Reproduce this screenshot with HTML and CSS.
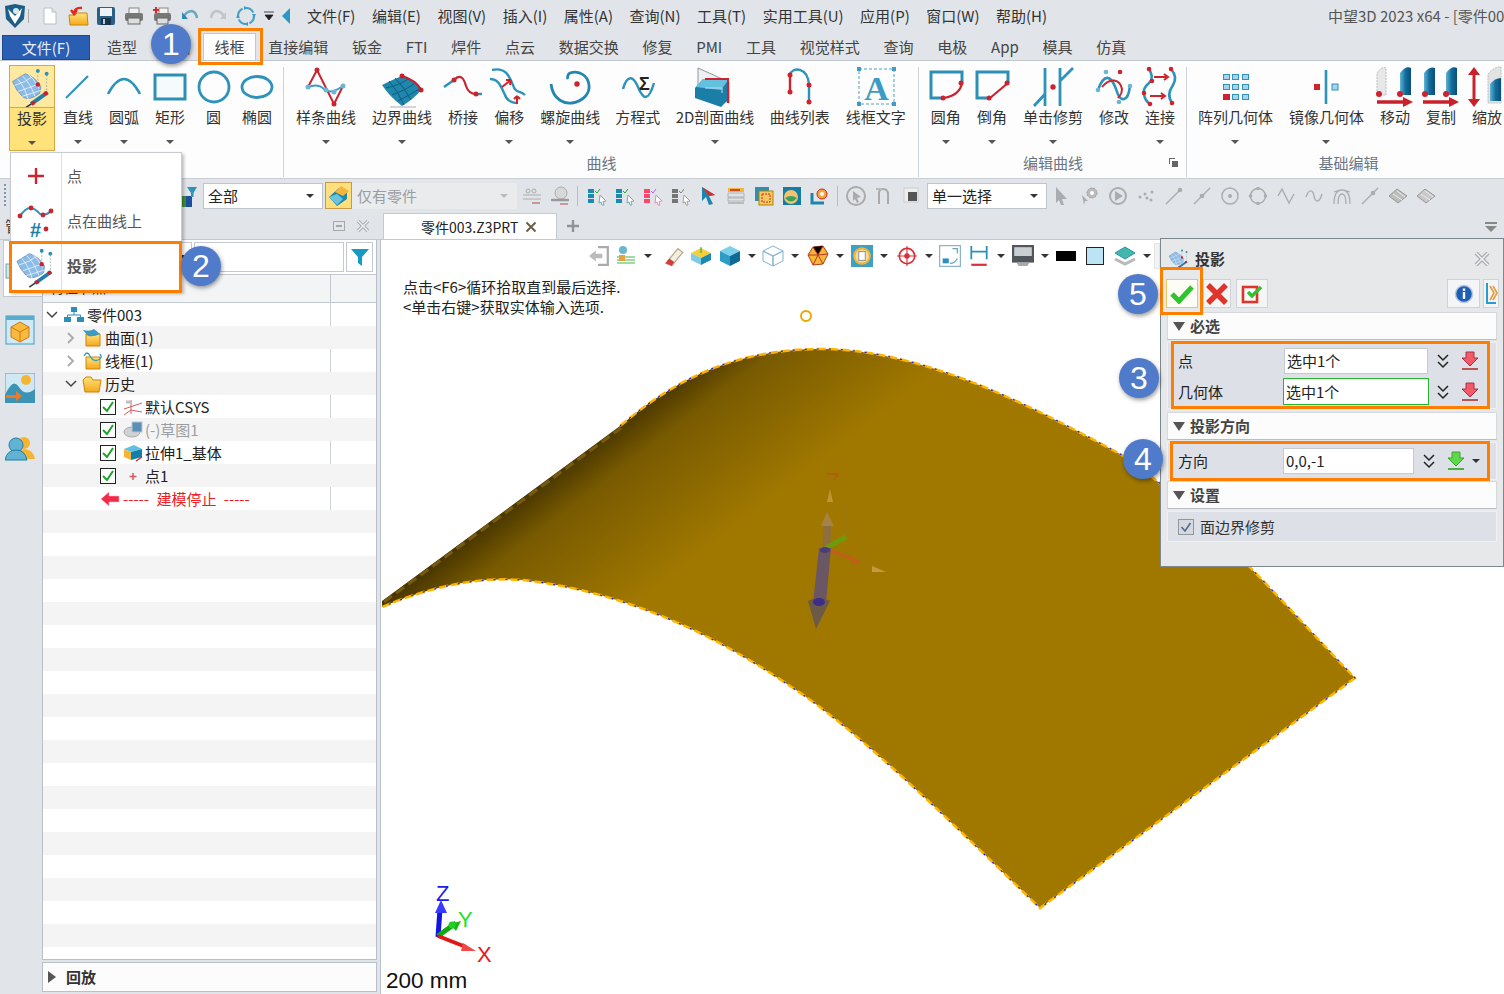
FILE: index.html
```html
<!DOCTYPE html>
<html lang="zh-CN">
<head>
<meta charset="utf-8">
<title>中望3D 2023 x64</title>
<link rel="stylesheet" href="styles.css">
</head>
<body>
<svg class="defs" width="0" height="0">
<defs>
<linearGradient id="surf" gradientUnits="userSpaceOnUse" x1="460" y1="530" x2="560" y2="660"><stop offset="0" stop-color="#3c2c00"/><stop offset=".3" stop-color="#785a00"/><stop offset="1" stop-color="#a07800"/></linearGradient>
<linearGradient id="cyl" x1="0" y1="0" x2="1" y2="0"><stop offset="0" stop-color="#5fb4d6"/><stop offset=".5" stop-color="#126d9b"/><stop offset="1" stop-color="#0a4f78"/></linearGradient>
<linearGradient id="yel" x1="0" y1="0" x2="0" y2="1"><stop offset="0" stop-color="#ffe27a"/><stop offset="1" stop-color="#f4a81c"/></linearGradient>
<symbol id="proj" viewBox="0 0 44 44">
<path d="M2 16 L15 8 Q24 10 31 21 L30 28 Q19 36 13 32 Q6 26 2 16Z" fill="#8cbbe6" stroke="#6d8fb2" stroke-width=".8"/>
<path d="M7 13 Q14 20 18 34 M12 10 Q20 17 25 31 M18 8 Q24 13 29 23 M4 20 Q15 17 24 10 M8 26 Q20 22 30 18 M12 31 Q22 28 31 25" fill="none" stroke="#e4f0fb" stroke-width=".9"/>
<path d="M28 6 V19 M37 9 V26" stroke="#8aa" stroke-width=".8" stroke-dasharray="2 1.5"/>
<path d="M21 39 L38 27" stroke="#1f7fa8" stroke-width="4"/><path d="M15 43 L21 39" stroke="#333" stroke-width="1.6"/>
<circle cx="28" cy="5" r="2" fill="#2b8fb8"/><circle cx="37" cy="8" r="2" fill="#2b8fb8"/><circle cx="28" cy="19" r="2.3" fill="#d01f2b"/><circle cx="23" cy="38" r="2.2" fill="#d01f2b"/><circle cx="36" cy="28" r="2.2" fill="#d01f2b"/>
</symbol>
<symbol id="redown" viewBox="0 0 20 20"><path d="M6 1H14V7H18L10 15L2 7H6Z" fill="#f25a6a" stroke="#a83040" stroke-width="1"/><path d="M2 18H18" stroke="#b55" stroke-width="2"/></symbol>
<symbol id="chev" viewBox="0 0 14 16"><path d="M2 2L7 7L12 2M2 9L7 14L12 9" fill="none" stroke="#222" stroke-width="1.5"/></symbol>
<symbol id="chk" viewBox="0 0 16 16"><rect x=".5" y=".5" width="15" height="15" fill="#fff" stroke="#222"/><path d="M3 8L7 12L13 3" fill="none" stroke="#19a52b" stroke-width="2"/></symbol>
<symbol id="slct" viewBox="0 0 22 22"><rect x="3" y="4" width="6" height="4" fill="#1a8ab0"/><rect x="3" y="9" width="6" height="4" fill="#1a8ab0"/><rect x="3" y="14" width="6" height="4" fill="#1a8ab0"/><path d="M15 10L21 16L18 16.500L19 20L17 20L16 17L14 18Z" fill="#fff" stroke="#7aa"/><path d="M10 6L12 8L15 4" stroke="#2a2" fill="none"/></symbol>
</defs>
</svg>

<div class="app">
<header class="titlebar">
  <svg class="logo" width="24" height="26" viewBox="0 0 24 26"><path d="M2 3L12 1L22 3L21 16L12 25L3 16Z" fill="#1d5e86"/><path d="M5 6L12 13L19 5L17 13L12 21L7 13Z" fill="#fff"/><circle cx="13" cy="8" r="3" fill="#d8e6ee"/></svg>
  <span class="qsep"></span>
  <span class="qa"><svg width="20" height="20" viewBox="0 0 20 20"><path d="M4 2H12L16 6V18H4Z" fill="#fff" stroke="#b8bec4"/><path d="M12 2V6H16" fill="#e5e8ea" stroke="#b8bec4"/></svg></span>
  <span class="qa"><svg width="22" height="22" viewBox="0 0 22 22"><path d="M2 10H8L10 8H20L21 20H3Z" fill="url(#yel)" stroke="#c8860a"/><path d="M15 3Q8 2 7 8M4 5L7 9L10 5" fill="none" stroke="#e02a1c" stroke-width="2.400"/></svg></span>
  <span class="qa"><svg width="20" height="20" viewBox="0 0 20 20"><rect x="1" y="1" width="18" height="18" rx="2" fill="#2b5f83"/><rect x="4" y="2" width="12" height="8" fill="#eef3f6"/><rect x="5" y="12" width="10" height="7" fill="#17364c"/><rect x="7" y="13" width="2" height="5" fill="#bcd"/></svg></span>
  <span class="qa"><svg width="20" height="20" viewBox="0 0 20 20"><rect x="5" y="2" width="10" height="6" fill="#f2f2f2" stroke="#888"/><rect x="1" y="7" width="18" height="8" rx="2" fill="#777"/><rect x="4" y="12" width="12" height="6" fill="#ddd" stroke="#666"/></svg></span>
  <span class="qa"><svg width="20" height="20" viewBox="0 0 20 20"><rect x="7" y="2" width="9" height="6" fill="#f2f2f2" stroke="#888"/><rect x="2" y="7" width="17" height="8" rx="2" fill="#777"/><rect x="5" y="12" width="11" height="6" fill="#ddd" stroke="#666"/><path d="M1 4H7M4 1V7" stroke="#d42a2a" stroke-width="2"/></svg></span>
  <span class="qa"><svg width="18" height="14" viewBox="0 0 18 14"><path d="M2 9Q5 2 11 2Q15 3 16 9" fill="none" stroke="#6ba7bd" stroke-width="2.500"/><path d="M1 3V10H7Z" fill="#2d8bb0"/></svg></span>
  <span class="qa"><svg width="18" height="14" viewBox="0 0 18 14"><path d="M16 9Q13 2 7 2Q3 3 2 9" fill="none" stroke="#c0c4c7" stroke-width="2.500"/><path d="M17 3V10H11Z" fill="#c4c7ca"/></svg></span>
  <span class="qa"><svg width="22" height="22" viewBox="0 0 22 22"><circle cx="11" cy="11" r="8" fill="none" stroke="#4aa3c7" stroke-width="2.200" stroke-dasharray="9 3.500"/><path d="M9 1L13 3L9 5ZM13 21L9 19L13 17ZM1 13L3 9L5 13ZM21 9L19 13L17 9Z" fill="#3f9cc3"/></svg></span>
  <span class="qa-sm"><svg width="12" height="10" viewBox="0 0 12 10"><path d="M1 1H11M2 4H10L6 9Z" fill="#222" stroke="#222" stroke-width=".8"/></svg></span>
  <span class="qa-sm"><svg width="10" height="16" viewBox="0 0 10 16"><path d="M9 0V16L1 8Z" fill="#2a97c4"/></svg></span>
  <nav class="menubar"><span>文件(F)</span><span>编辑(E)</span><span>视图(V)</span><span>插入(I)</span><span>属性(A)</span><span>查询(N)</span><span>工具(T)</span><span>实用工具(U)</span><span>应用(P)</span><span>窗口(W)</span><span>帮助(H)</span></nav>
  <div class="apptitle">中望3D 2023 x64 - [零件003.Z3PRT]</div>
</header>

<div class="tabbar">
  <span class="filetab">文件(F)</span>
  <span class="tab">造型</span><span class="tab">曲面</span><span class="tab active">线框</span><span class="tab">直接编辑</span><span class="tab">钣金</span><span class="tab">FTI</span><span class="tab">焊件</span><span class="tab">点云</span><span class="tab">数据交换</span><span class="tab">修复</span><span class="tab">PMI</span><span class="tab">工具</span><span class="tab">视觉样式</span><span class="tab">查询</span><span class="tab">电极</span><span class="tab">App</span><span class="tab">模具</span><span class="tab">仿真</span>
</div>

<section class="ribbon">
  <div class="rgroup g1">
    <div class="ritems">
      <div class="ritem hot"><svg class="ric" width="45" height="42" viewBox="0 0 44 42"><use href="#proj" width="44" height="44"/></svg><span>投影</span><i class="caret"></i></div>
      <div class="ritem"><svg class="ric" viewBox="0 0 44 44"><path d="M10 33L32 11" stroke="#2e93ba" stroke-width="2.200"/></svg><span>直线</span><i class="caret"></i></div>
      <div class="ritem"><svg class="ric" viewBox="0 0 44 44"><path d="M6 29Q22 -1 38 29" fill="none" stroke="#2e93ba" stroke-width="2.600"/></svg><span>圆弧</span><i class="caret"></i></div>
      <div class="ritem"><svg class="ric" viewBox="0 0 44 44"><rect x="7" y="10" width="30" height="24" fill="#f5fafc" stroke="#2e8fb5" stroke-width="3"/></svg><span>矩形</span><i class="caret"></i></div>
      <div class="ritem narrow"><svg class="ric" viewBox="0 0 44 44"><circle cx="22" cy="22" r="15" fill="none" stroke="#2e93ba" stroke-width="2.800"/></svg><span>圆</span></div>
      <div class="ritem"><svg class="ric" viewBox="0 0 44 44"><ellipse cx="22" cy="22" rx="15" ry="10.500" fill="none" stroke="#2e93ba" stroke-width="2.800"/></svg><span>椭圆</span></div>
    </div>
    <div class="rlabel"></div>
  </div>
  <i class="rsep"></i>
  <div class="rgroup">
    <div class="ritems">
      <div class="ritem"><svg class="ric" viewBox="0 0 44 44"><path d="M4 22L13 5L30 39L39 21" fill="none" stroke="#c9252e" stroke-width="2"/><path d="M4 22Q14 18 20 24T39 21" fill="none" stroke="#3d9bc0" stroke-width="2"/><circle cx="13" cy="5" r="2.500" fill="#c9252e"/><circle cx="30" cy="39" r="2.500" fill="#c9252e"/><circle cx="4" cy="22" r="2.500" fill="#6cb6d4"/><circle cx="22" cy="25" r="2.500" fill="#6cb6d4"/><circle cx="30" cy="27" r="2.500" fill="#6cb6d4"/><circle cx="39" cy="21" r="2.500" fill="#6cb6d4"/></svg><span>样条曲线</span><i class="caret"></i></div>
      <div class="ritem"><svg class="ric" viewBox="0 0 44 44"><path d="M2 20Q14 14 22 11Q36 16 42 24Q34 34 22 41Q10 32 2 20Z" fill="#1f87ac"/><path d="M9 16Q18 26 24 40M15 13Q24 22 31 35M6 23Q20 20 28 14M12 30Q26 25 34 19M18 36Q30 30 39 24" fill="none" stroke="#0e5d82" stroke-width="1"/><path d="M22 11Q36 15 41 25" fill="none" stroke="#c81f2a" stroke-width="2.200"/><circle cx="22" cy="11" r="2.500" fill="#c81f2a"/><circle cx="41" cy="25" r="2.500" fill="#c81f2a"/><path d="M10 42H36" stroke="#bbb" stroke-width="2" opacity=".6"/></svg><span>边界曲线</span><i class="caret"></i></div>
      <div class="ritem"><svg class="ric" viewBox="0 0 44 44"><path d="M3 22L13 15M35 29H41" stroke="#2e93ba" stroke-width="2.500"/><path d="M13 15C20 8 23 14 25 21C27 27 30 29 35 29" fill="none" stroke="#c9252e" stroke-width="2.200"/><circle cx="13" cy="15" r="2.500" fill="#c9252e"/><circle cx="35" cy="29" r="2.500" fill="#c9252e"/></svg><span>桥接</span></div>
      <div class="ritem"><svg class="ric" viewBox="0 0 44 44"><path d="M5 5C18 2 22 10 26 20C28 28 34 26 38 30M3 14C12 14 14 22 18 30C20 36 26 38 30 38" fill="none" stroke="#2e93ba" stroke-width="2.400"/><path d="M15 22L24 15M24 15L19 15M24 15L23 20M30 39V31M30 31L27 34M30 31L33 34" fill="none" stroke="#d0222c" stroke-width="2"/></svg><span>偏移</span><i class="caret"></i></div>
      <div class="ritem"><svg class="ric" viewBox="0 0 44 44"><path d="M3 19C5 36 18 39 24 38C36 36 42 28 41 20C40 10 30 5 22 8C20 9 19 12 20 14" fill="none" stroke="#2386ae" stroke-width="2.800"/><circle cx="29" cy="19" r="2.700" fill="#d0222c"/></svg><span>螺旋曲线</span><i class="caret"></i></div>
      <div class="ritem m"><svg class="ric" viewBox="0 0 44 44"><path d="M7 24C11 10 17 10 22 22S32 38 38 18" fill="none" stroke="#2e93ba" stroke-width="2.500"/><text x="23" y="25" class="sigma">Σ</text></svg><span>方程式</span></div>
      <div class="ritem d2"><svg class="ric" viewBox="0 0 44 44"><path d="M5 3L36 17V38L5 24Z" fill="#eef0f2" stroke="#8f979d"/><path d="M2 23L10 14L36 14V34L28 42L2 33Z" fill="#1b7ea6"/><path d="M10 14L36 14L28 25L3 22Z" fill="#63c0de"/><path d="M12 23H29V28" fill="none" stroke="#b7e0ec"/><path d="M12 14H35V38" fill="none" stroke="#d0222c" stroke-width="2"/></svg><span>2D剖面曲线</span><i class="caret"></i></div>
      <div class="ritem"><svg class="ric" viewBox="0 0 44 44"><path d="M12 10C14 1 30 2 31 20V37" fill="none" stroke="#2e93ba" stroke-width="2.400"/><path d="M12 10V27" stroke="#d0222c" stroke-width="2.400"/><circle cx="12" cy="10" r="2.500" fill="#d0222c"/><circle cx="12" cy="27" r="2.500" fill="#d0222c"/><circle cx="31" cy="20" r="2.500" fill="#d0222c"/><circle cx="31" cy="37" r="2.500" fill="#d0222c"/></svg><span>曲线列表</span></div>
      <div class="ritem endg"><svg class="ric" viewBox="0 0 44 44"><rect x="5" y="4" width="35" height="35" fill="none" stroke="#4fa0c0" stroke-dasharray="3 2"/><text x="22.500" y="35" class="bigA">A</text><g fill="#3f9cc3"><rect x="3" y="2" width="4" height="4"/><rect x="38" y="2" width="4" height="4"/><rect x="3" y="37" width="4" height="4"/><rect x="38" y="37" width="4" height="4"/></g></svg><span>线框文字</span></div>
    </div>
    <div class="rlabel">曲线</div>
  </div>
  <i class="rsep"></i>
  <div class="rgroup">
    <div class="ritems">
      <div class="ritem"><svg class="ric" viewBox="0 0 44 44"><path d="M17 33H7V7H38V18" fill="none" stroke="#2e8fb5" stroke-width="3"/><path d="M38 18Q36 30 20 33" fill="none" stroke="#c9252e" stroke-width="2.200"/><circle cx="37" cy="18" r="2.500" fill="#c9252e"/><circle cx="19" cy="33" r="2.500" fill="#c9252e"/></svg><span>圆角</span><i class="caret"></i></div>
      <div class="ritem"><svg class="ric" viewBox="0 0 44 44"><path d="M17 33H7V7H38V18" fill="none" stroke="#2e8fb5" stroke-width="3"/><path d="M38 18L20 33" fill="none" stroke="#c9252e" stroke-width="2.200"/><circle cx="37" cy="18" r="2.500" fill="#c9252e"/><circle cx="19" cy="33" r="2.500" fill="#c9252e"/></svg><span>倒角</span><i class="caret"></i></div>
      <div class="ritem"><svg class="ric" viewBox="0 0 44 44"><path d="M14 3V41M29 3V41M29 16L42 3M3 41L14 29" fill="none" stroke="#2e93ba" stroke-width="2.800"/><circle cx="22" cy="22" r="2.700" fill="#d0222c"/></svg><span>单击修剪</span><i class="caret"></i></div>
      <div class="ritem"><svg class="ric" viewBox="0 0 44 44"><path d="M6 25C12 8 19 10 24 24C28 38 36 38 38 21" fill="none" stroke="#2e93ba" stroke-width="2.600"/><path d="M10 22C18 12 28 14 30 24C30 30 28 30 26 33" fill="none" stroke="#c9252e" stroke-width="2"/><circle cx="14" cy="7" r="2.300" fill="#6cb6d4"/><circle cx="28" cy="7" r="2.300" fill="#d0222c"/><circle cx="6" cy="25" r="2.300" fill="#6cb6d4"/><circle cx="38" cy="21" r="2.300" fill="#6cb6d4"/><circle cx="27" cy="37" r="2.300" fill="#6cb6d4"/></svg><span>修改</span></div>
      <div class="ritem"><svg class="ric" viewBox="0 0 44 44"><path d="M11 4Q16 12 12 17Q4 24 6 29Q7 36 12 39M33 4Q40 12 35 20Q28 30 34 38" fill="none" stroke="#2e93ba" stroke-width="2.600"/><path d="M16 12H28M26 9L30 12L26 15M12 31H25M23 28L27 31L23 34" fill="none" stroke="#d0222c" stroke-width="2"/><g fill="#d0222c"><circle cx="11" cy="4" r="2.300"/><circle cx="33" cy="4" r="2.300"/><circle cx="14" cy="16" r="2.300"/><circle cx="6" cy="28" r="2.300"/><circle cx="12" cy="39" r="2.300"/><circle cx="34" cy="38" r="2.300"/></g></svg><span>连接</span><i class="caret"></i></div>
    </div>
    <div class="rlabel withcorner">编辑曲线<svg class="corner" width="9" height="9" viewBox="0 0 9 9"><path d="M0 0H6V1H1V6H0Z" fill="#666"/><path d="M3 3H9V9H3Z" fill="#666"/></svg></div>
  </div>
  <i class="rsep last"></i>
  <div class="rgroup">
    <div class="ritems">
      <div class="ritem"><svg class="ric" viewBox="0 0 44 44"><g fill="#a9d2ea" stroke="#2e93ba"><rect x="10.500" y="9.500" width="6" height="5"/><rect x="19.500" y="9.500" width="6" height="5"/><rect x="29.500" y="9.500" width="6" height="5"/><rect x="10.500" y="19.500" width="6" height="5"/><rect x="19.500" y="19.500" width="6" height="5"/><rect x="29.500" y="19.500" width="6" height="5"/><rect x="19.500" y="29.500" width="6" height="5"/><rect x="29.500" y="29.500" width="6" height="5"/></g><rect x="10" y="29" width="7" height="6" fill="#d0222c"/></svg><span>阵列几何体</span><i class="caret"></i></div>
      <div class="ritem"><svg class="ric" viewBox="0 0 44 44"><path d="M22 5V39" stroke="#2e93ba" stroke-width="2.600"/><rect x="10" y="19" width="6" height="6" fill="#d0222c"/><rect x="28" y="19" width="6" height="6" fill="#a9d2ea" stroke="#2e93ba"/></svg><span>镜像几何体</span><i class="caret"></i></div>
      <div class="ritem"><svg class="ric" viewBox="0 0 44 44"><path d="M4 8Q9 1 13 3V30H4Z" fill="#e8e8e8" stroke="#bbb" stroke-dasharray="2 1"/><path d="M27 8Q33 0 38 3V30H27Z" fill="url(#cyl)"/><circle cx="6" cy="29" r="3" fill="#d0222c"/><circle cx="27" cy="29" r="3" fill="#d0222c"/><path d="M4 37H32" stroke="#c9202a" stroke-width="3.500"/><path d="M30 32L40 37L30 42Z" fill="#c9202a"/></svg><span>移动</span></div>
      <div class="ritem"><svg class="ric" viewBox="0 0 44 44"><path d="M5 8Q11 1 16 3V30H5Z" fill="url(#cyl)"/><path d="M27 8Q33 0 38 3V30H27Z" fill="url(#cyl)"/><circle cx="6" cy="29" r="3" fill="#d0222c"/><circle cx="27" cy="29" r="3" fill="#d0222c"/><path d="M4 37H32" stroke="#c9202a" stroke-width="3.500"/><path d="M30 32L40 37L30 42Z" fill="#c9202a"/></svg><span>复制</span></div>
      <div class="ritem"><svg class="ric" viewBox="0 0 44 44"><path d="M9 7V37" stroke="#c9202a" stroke-width="3"/><path d="M3 10L9 2L15 10ZM3 34L9 42L15 34Z" fill="#c9202a"/><path d="M23 9Q30 1 36 2V38H23Z" fill="#e3e3e3" stroke="#bbb" stroke-dasharray="2 1"/><path d="M25 19Q30 13 36 13V36H25Z" fill="url(#cyl)"/></svg><span>缩放</span></div>
    </div>
    <div class="rlabel shifted">基础编辑</div>
  </div>
</section>

<div class="toolbar">
  <i class="grip"></i>
  <span class="tb-spacer"></span>
  <svg class="filt" width="20" height="24" viewBox="0 0 20 24"><rect x="0" y="12" width="4" height="11" fill="#3f8f3a"/><rect x="4" y="12" width="6" height="11" fill="#1d4f9e"/><path d="M5 3H15L11.500 9V13L9 13V9Z" fill="#2e93ba"/></svg>
  <div class="combo c-all"><span>全部</span><i class="caret dk"></i></div>
  <span class="hotbtn"><svg width="24" height="24" viewBox="0 0 24 24"><path d="M2 13L12 4L20 8V15L10 22Z" fill="#1e88b0"/><path d="M8 8L14 2L22 7L16 12Z" fill="#f4b53d"/><path d="M2 13L10 10L16 15L10 21Z" fill="#6cc3de"/></svg></span>
  <div class="combo c-parts"><span>仅有零件</span><i class="caret lt"></i></div>
  <span class="tb"><svg width="20" height="20" viewBox="0 0 20 20"><path d="M1 9H19M1 13H19" stroke="#aaa"/><circle cx="6" cy="5" r="2" fill="none" stroke="#aaa"/><circle cx="12" cy="5" r="2" fill="none" stroke="#aaa"/><path d="M10 17H18" stroke="#c99" stroke-width="2"/></svg></span>
  <span class="tb"><svg width="20" height="20" viewBox="0 0 20 20"><circle cx="11" cy="7" r="6" fill="#d8d8d8" stroke="#aaa"/><path d="M1 14H19" stroke="#999" stroke-width="2.500"/><path d="M10 18H18" stroke="#c99" stroke-width="2"/></svg></span>
  <i class="vsep"></i>
  <span class="tb"><svg width="22" height="22"><use href="#slct"/></svg></span>
  <span class="tb"><svg width="22" height="22"><use href="#slct"/></svg></span>
  <span class="tb"><svg width="22" height="22" class="hue-r"><use href="#slct"/></svg></span>
  <span class="tb"><svg width="22" height="22" class="gray"><use href="#slct"/></svg></span>
  <span class="tb"><svg width="20" height="20" viewBox="0 0 20 20"><path d="M4 1L17 9L11 10L15 18L11 19L8 11L4 15Z" fill="#1a86ae"/><path d="M4 1L17 9L11 10Z" fill="#d43030"/></svg></span>
  <span class="tb"><svg width="20" height="20" viewBox="0 0 20 20"><rect x="2" y="2" width="16" height="4" fill="#f4b53d"/><rect x="2" y="7" width="16" height="4" fill="#dfe3e6" stroke="#888" stroke-width=".5"/><rect x="2" y="12" width="16" height="3" fill="#dfe3e6" stroke="#888" stroke-width=".5"/><path d="M4 4H14" stroke="#c22" stroke-width="1.500"/><rect x="2" y="16" width="16" height="2" fill="#bbb"/></svg></span>
  <span class="tb"><svg width="20" height="20" viewBox="0 0 20 20"><rect x="1" y="1" width="14" height="14" fill="#2b8fb8"/><rect x="5" y="5" width="14" height="14" fill="#f6c860" stroke="#b78200"/><rect x="8" y="8" width="8" height="8" fill="none" stroke="#d22" stroke-dasharray="2 1"/></svg></span>
  <span class="tb"><svg width="20" height="20" viewBox="0 0 20 20"><rect x="1" y="1" width="18" height="18" fill="#157da5"/><circle cx="9" cy="11" r="7" fill="#f4c36e"/><path d="M3 12Q9 8 15 12Q9 19 3 12" fill="#3aa35a"/></svg></span>
  <span class="tb"><svg width="20" height="20" viewBox="0 0 20 20"><path d="M2 7V17H14" fill="none" stroke="#1a86ae" stroke-width="3"/><circle cx="12" cy="8" r="5" fill="#f4a83a" stroke="#c22"/><circle cx="12" cy="8" r="2" fill="#fff"/></svg></span>
  <i class="vsep"></i>
  <span class="tb"><svg width="22" height="22" viewBox="0 0 22 22"><circle cx="11" cy="11" r="9" fill="none" stroke="#aaa" stroke-width="2"/><path d="M8 6L16 12L12 13L14 17L12 18L10 14L8 16Z" fill="#aaa"/></svg></span>
  <span class="tb"><svg width="20" height="20" viewBox="0 0 20 20"><path d="M5 18V7Q5 3 9 3T14 7V18" fill="none" stroke="#aaa" stroke-width="2"/><path d="M2 3H8" stroke="#bbb" stroke-width="2"/></svg></span>
  <span class="tb"><svg width="18" height="18" viewBox="0 0 18 18"><rect x="1" y="1" width="14" height="14" fill="#eee" stroke="#ccc"/><rect x="5" y="5" width="9" height="9" fill="#555"/></svg></span>
  <div class="combo c-sel"><span>单一选择</span><i class="caret dk"></i></div>
  <span class="tb first"><svg width="20" height="20" viewBox="0 0 20 20"><path d="M4 1L15 13L10 13L12 19L9 19L7 14L4 17Z" fill="#a9adb1"/></svg></span>
  <span class="tb"><svg width="20" height="20" viewBox="0 0 20 20"><circle cx="12" cy="7" r="5" fill="#bbb" stroke="#999" stroke-dasharray="2 1"/><circle cx="12" cy="7" r="2" fill="#fff"/><path d="M2 9L8 15L5 15L4 19Z" fill="#a9adb1"/></svg></span>
  <span class="tb"><svg width="20" height="20" viewBox="0 0 20 20"><circle cx="10" cy="10" r="8" fill="none" stroke="#a9adb1" stroke-width="2"/><path d="M7 5L15 10L7 15Z" fill="#a9adb1"/></svg></span>
  <span class="tb"><svg width="20" height="20" viewBox="0 0 20 20" fill="#a9adb1"><circle cx="4" cy="11" r="1.500"/><circle cx="9" cy="8" r="1.500"/><circle cx="11" cy="12" r="1.500"/><circle cx="16" cy="6" r="1.500"/><circle cx="15" cy="14" r="1.500"/></svg></span>
  <span class="tb"><svg width="20" height="20" viewBox="0 0 20 20"><path d="M2 18L16 4" stroke="#a9adb1" stroke-width="1.500"/><circle cx="16" cy="4" r="2.300" fill="#a9adb1"/></svg></span>
  <span class="tb"><svg width="20" height="20" viewBox="0 0 20 20"><path d="M2 18L18 2" stroke="#a9adb1" stroke-width="1.500"/><circle cx="10" cy="10" r="2.300" fill="#a9adb1"/></svg></span>
  <span class="tb"><svg width="20" height="20" viewBox="0 0 20 20"><circle cx="10" cy="10" r="8" fill="none" stroke="#a9adb1" stroke-width="1.500"/><circle cx="10" cy="10" r="2" fill="#a9adb1"/></svg></span>
  <span class="tb"><svg width="20" height="20" viewBox="0 0 20 20" fill="#a9adb1"><circle cx="10" cy="10" r="7.500" fill="none" stroke="#a9adb1" stroke-width="1.500"/><circle cx="10" cy="2.500" r="1.800"/><circle cx="10" cy="17.500" r="1.800"/><circle cx="2.500" cy="10" r="1.800"/><circle cx="17.500" cy="10" r="1.800"/></svg></span>
  <span class="tb"><svg width="20" height="20" viewBox="0 0 20 20"><path d="M2 10L6 3L13 17L18 8" fill="none" stroke="#a9adb1" stroke-width="1.400"/></svg></span>
  <span class="tb"><svg width="20" height="20" viewBox="0 0 20 20"><path d="M2 11C5 2 9 4 10 10S15 18 18 8" fill="none" stroke="#a9adb1" stroke-width="1.400"/></svg></span>
  <span class="tb"><svg width="20" height="20" viewBox="0 0 20 20"><path d="M2 18Q2 4 10 4T18 18M2 6L8 4M18 6L12 4M6 18Q6 8 10 8T14 18" fill="none" stroke="#a9adb1" stroke-width="1.300"/></svg></span>
  <span class="tb"><svg width="20" height="20" viewBox="0 0 20 20"><path d="M2 18L18 2" stroke="#a9adb1" stroke-width="1.400"/><circle cx="13" cy="7" r="2.300" fill="#a9adb1"/></svg></span>
  <span class="tb"><svg width="20" height="16" viewBox="0 0 20 16"><path d="M1 8L9 1L19 8L10 15Z" fill="#bcbcbc" stroke="#999"/><path d="M5 6L14 12M9 3L17 9" stroke="#eee"/></svg></span>
  <span class="tb"><svg width="20" height="16" viewBox="0 0 20 16"><path d="M1 8L9 1L19 8L10 15Z" fill="#c8c8c8" stroke="#999"/><path d="M5 6L14 12M9 3L17 9" stroke="#eee"/></svg></span>
</div>

<div class="docbar">
  <div class="panelhead">
    <span class="pt">管理器</span>
    <svg class="pbtn" width="12" height="10" viewBox="0 0 12 10"><rect x=".5" y=".5" width="11" height="9" fill="#e3e5e7" stroke="#a4a8ac"/><rect x="3" y="4" width="6" height="2" fill="#a4a8ac"/></svg>
    <svg class="pbtn x" width="14" height="12" viewBox="0 0 14 12"><path d="M2 1L12 11M12 1L2 11" stroke="#a8adb2" stroke-width="3.400"/><path d="M2 1L12 11M12 1L2 11" stroke="#f4f5f6" stroke-width="1.200"/></svg>
  </div>
  <div class="doctab"><span>零件003.Z3PRT</span><svg width="12" height="12" viewBox="0 0 12 12"><path d="M1.500 1.500L10.500 10.500M10.500 1.500L1.500 10.500" stroke="#6b5f46" stroke-width="2"/></svg></div>
  <svg class="plus" width="14" height="14" viewBox="0 0 14 14"><path d="M7 1V13M1 7H13" stroke="#8f9499" stroke-width="2.400"/></svg>
  <svg class="expander" width="14" height="12" viewBox="0 0 14 12"><path d="M1 1H13V3H1Z" fill="#888"/><path d="M1 5H13L7 11Z" fill="#888"/></svg>
</div>

<main class="main">
  <aside class="strip">
    <div class="activetab"><svg class="cliptab" width="10" height="16" viewBox="0 0 10 16"><rect x="1" y="1" width="14" height="14" fill="#cfe5f2" stroke="#6aa"/></svg></div>
    <span class="sbtn s-a"><svg width="30" height="30" viewBox="0 0 30 30"><rect x="1" y="1" width="28" height="28" fill="#cfeaf6" stroke="#3f9cc3"/><rect x="1" y="1" width="28" height="4" fill="#57acd0"/><path d="M6 12L15 7L24 12V22L15 27L6 22Z" fill="#f8b93c" stroke="#d07a10"/><path d="M6 12L15 17L24 12M15 17V27" fill="none" stroke="#d07a10"/></svg></span>
    <span class="sbtn s-b"><svg width="30" height="30" viewBox="0 0 30 30"><rect x="0" y="0" width="30" height="30" fill="#cfe9f4" stroke="#88b"/><path d="M0 22Q8 4 14 14T30 16V30H0Z" fill="#3c93b5"/><circle cx="21" cy="7" r="5" fill="#f5b431"/><path d="M1 22H11V18L17 23L11 28V25H1Z" fill="#ee7b23"/></svg></span>
    <span class="sbtn s-c"><svg width="30" height="26" viewBox="0 0 30 26"><circle cx="19" cy="8" r="6" fill="#f5b431"/><path d="M12 24Q13 14 19 14Q28 14 30 24Z" fill="#f5b431"/><circle cx="11" cy="10" r="7" fill="#62b3d3" stroke="#1e7ea4"/><path d="M0 25Q2 15 11 15Q20 15 22 25Z" fill="#62b3d3" stroke="#1e7ea4"/></svg></span>
  </aside>
  <section class="panel">
    <div class="treebox">
      <div class="searchrow">
        <div class="sel"><i class="caret dk"></i></div>
        <div class="search"></div>
        <div class="filterbtn"><svg width="20" height="20" viewBox="0 0 20 20"><path d="M1 2H19L12 10V19L8 16V10Z" fill="#159ac4"/></svg></div>
      </div>
      <div class="thead"><span class="th1">特征节点</span><span class="th2"></span></div>
      <div class="tree">
        <div class="row l0"><svg class="ex" width="12" height="8" viewBox="0 0 12 8"><path d="M1 1L6 6L11 1" fill="none" stroke="#444" stroke-width="1.500"/></svg><svg class="ti" width="20" height="16" viewBox="0 0 20 16"><rect x="7" y="0" width="6" height="5" fill="#2b8fb8"/><rect x="0" y="10" width="7" height="5" fill="#2b8fb8"/><rect x="13" y="10" width="7" height="5" fill="#2b8fb8"/><path d="M10 5V8M3.500 10V8H16.500V10" fill="none" stroke="#2b8fb8"/></svg><span>零件003</span></div>
        <div class="row l1"><svg class="ex" width="8" height="12" viewBox="0 0 8 12"><path d="M1 1L6 6L1 11" fill="none" stroke="#aaa" stroke-width="1.800"/></svg><svg class="ti" width="20" height="18" viewBox="0 0 20 18"><path d="M4 5H18V17H4Z" fill="url(#yel)" stroke="#c8860a"/><path d="M1 1Q8 3 12 0L18 5Q12 8 6 7Z" fill="#3d9bc0"/></svg><span>曲面(1)</span></div>
        <div class="row l1"><svg class="ex" width="8" height="12" viewBox="0 0 8 12"><path d="M1 1L6 6L1 11" fill="none" stroke="#aaa" stroke-width="1.800"/></svg><svg class="ti" width="20" height="18" viewBox="0 0 20 18"><path d="M4 5H18V17H4Z" fill="url(#yel)" stroke="#c8860a"/><path d="M2 4Q5 -2 8 4T16 8T18 2" fill="none" stroke="#3d9bc0" stroke-width="1.300"/></svg><span>线框(1)</span></div>
        <div class="row l1"><svg class="ex" width="12" height="8" viewBox="0 0 12 8"><path d="M1 1L6 6L11 1" fill="none" stroke="#444" stroke-width="1.500"/></svg><svg class="ti" width="20" height="18" viewBox="0 0 20 18"><path d="M1 5L4 2H9L11 5H19L17 17H3Z" fill="url(#yel)" stroke="#c8860a"/></svg><span>历史</span></div>
        <div class="row l2"><svg class="cb" width="16" height="16"><use href="#chk"/></svg><svg class="ti" width="20" height="20" viewBox="0 0 20 20"><path d="M8 17V3M8 13L19 15M8 13L1 18M1 12L19 6" fill="none" stroke="#d85a5a" stroke-width="1"/><path d="M3 5H8" stroke="#c0c0c0" stroke-width="3"/></svg><span>默认CSYS</span></div>
        <div class="row l2 dim"><svg class="cb" width="16" height="16"><use href="#chk"/></svg><svg class="ti" width="20" height="18" viewBox="0 0 20 18"><ellipse cx="9" cy="11" rx="8" ry="5" fill="#cfd2d4" stroke="#aaa"/><rect x="9" y="1" width="10" height="10" fill="#5b8fb5" stroke="#b9c6cf"/></svg><span>(-)草图1</span></div>
        <div class="row l2"><svg class="cb" width="16" height="16"><use href="#chk"/></svg><svg class="ti" width="20" height="18" viewBox="0 0 20 18"><path d="M1 5L11 1L19 5L8 8Z" fill="#5fc0e4"/><path d="M1 5L8 8V16L1 13Z" fill="#f4b43a"/><path d="M8 8L19 5V13L8 16Z" fill="#127fa8"/><path d="M13 17L19 13" stroke="#c22" stroke-width="1.400"/></svg><span>拉伸1_基体</span></div>
        <div class="row l2"><svg class="cb" width="16" height="16"><use href="#chk"/></svg><svg class="ti" width="20" height="12" viewBox="0 0 20 12"><path d="M10 3V10M6.500 6.500H13.500" stroke="#d8565e" stroke-width="1.500"/></svg><span>点1</span></div>
        <div class="row stop"><svg class="ar" width="20" height="16" viewBox="0 0 20 16"><path d="M1 8L9 1V5H19V11H9V15Z" fill="#f22a4a" stroke="#fbb" stroke-width=".5"/></svg><span>----- 建模停止 -----</span></div>
        <div class="stripes"></div>
      </div>
    </div>
    <div class="replay"><i class="tri-r"></i><b>回放</b></div>
  </section>
  <section class="viewport">
    <div class="vtools">
      <span class="vt w27"><svg viewBox="0 0 20 18"><path d="M9 1H18V17H9" fill="none" stroke="#aaa" stroke-width="2"/><path d="M1 9L7 4V7H13V11H7V14Z" fill="#bbb"/></svg></span>
      <span class="vt w47"><svg viewBox="0 0 20 22"><circle cx="7" cy="5" r="4" fill="#6ab7d4"/><path d="M1 12H19M1 15H19M1 18H19" stroke="#47b44a"/><rect x="3" y="10" width="6" height="6" fill="#e7a23a"/></svg><i class="caret dk"></i></span>
      <span class="vt w28"><svg viewBox="0 0 18 18"><path d="M3 15L13 3L17 6L8 17Z" fill="#f2efe6" stroke="#b9a878"/><path d="M3 15L6 11L10 14L8 17Z" fill="#d8393f"/></svg></span>
      <span class="vt w29"><svg viewBox="0 0 22 20"><path d="M1 7L11 2L21 7L11 12Z" fill="#f5cf3a"/><path d="M1 7L11 12V19L1 14Z" fill="#7dcbe4"/><path d="M11 12L21 7V14L11 19Z" fill="#1f88b0"/><path d="M11 1V7" stroke="#2a9b3f"/></svg></span>
      <span class="vt w43"><svg viewBox="0 0 22 22"><path d="M1 6L11 1L21 6L11 11Z" fill="#7dd0ea"/><path d="M1 6L11 11V21L1 16Z" fill="#2e9dc5"/><path d="M11 11L21 6V16L11 21Z" fill="#0f6a95"/></svg><i class="caret dk"></i></span>
      <span class="vt w45"><svg viewBox="0 0 22 22"><path d="M1 6L11 1L21 6L11 11Z M1 6L11 11V21L1 16Z M11 11L21 6V16L11 21Z" fill="#fff" stroke="#7fb4cc"/></svg><i class="caret dk"></i></span>
      <span class="vt w44"><svg viewBox="0 0 22 22"><path d="M6 2L16 1L21 9L16 19L6 20L1 10Z" fill="#f7b53a" stroke="#b13a1e"/><path d="M6 2L11 10L16 1M11 10L21 9M11 10L16 19M11 10L6 20M11 10H1" stroke="#b13a1e"/></svg><i class="caret dk"></i></span>
      <span class="vt w45"><svg viewBox="0 0 20 20"><rect x="0" y="0" width="20" height="20" fill="#3ea0c7"/><circle cx="10" cy="10" r="7" fill="#f4dc9e" stroke="#f0b43a" stroke-width="2"/><rect x="7" y="6" width="6" height="8" fill="#fff" stroke="#999"/></svg><i class="caret dk"></i></span>
      <span class="vt w43"><svg viewBox="0 0 20 20"><circle cx="10" cy="10" r="7" fill="none" stroke="#d8303a" stroke-width="1.500"/><path d="M10 1V19M1 10H19" stroke="#d8303a"/><circle cx="10" cy="10" r="2.500" fill="#d8303a"/></svg><i class="caret dk"></i></span>
      <span class="vt w29"><svg viewBox="0 0 18 18"><rect x=".5" y=".5" width="17" height="17" fill="#fff" stroke="#8cb3c8"/><path d="M11 3H15V7M15 11Q13 15 9 15" fill="none" stroke="#6aa"/><rect x="3" y="11" width="5" height="4" fill="#2b8fb8"/></svg></span>
      <span class="vt w44"><svg viewBox="0 0 18 20"><path d="M2 1V13M16 1V13M2 6H16" stroke="#2b8fb8" stroke-width="1.600"/><path d="M2 18H16" stroke="#d8303a" stroke-width="2"/></svg><i class="caret dk"></i></span>
      <span class="vt w43"><svg viewBox="0 0 20 20"><rect x="0" y="0" width="20" height="16" fill="#50565c"/><rect x="2" y="2" width="16" height="8" fill="#c9ced3"/><path d="M4 16H16L14 19H6Z" fill="#aaa"/></svg><i class="caret dk"></i></span>
      <span class="swatch black"></span>
      <span class="swatch blue"></span>
      <span class="vt w40"><svg viewBox="0 0 22 20"><path d="M1 13L11 18L21 13" fill="none" stroke="#b9b9b9" stroke-width="3"/><path d="M1 7L11 1L21 7L11 13Z" fill="#41b8a9" stroke="#2b8fb8"/></svg><i class="caret dk"></i></span>
      <span class="vend"></span>
    </div>
    <div class="hint"><p>点击&lt;F6&gt;循环拾取直到最后选择.</p><p>&lt;单击右键&gt;获取实体输入选项.</p></div>
    <svg class="scene" viewBox="380 239 1124 755" width="1124" height="755">
      <path d="M382 600 L620 425 C660 392 720 347 825 348 C930 350 1040 410 1120 453 C1200 505 1290 610 1355 677 L1040 907 C960 830 860 730 790 685 C710 630 620 590 523 579 C470 575 420 590 382 606Z" fill="url(#surf)"/>
      <path d="M384 601 L621 427" fill="none" stroke="#8a6a10" stroke-width="3" stroke-dasharray="10 5" opacity=".7"/>
      <path d="M620 425 C660 392 720 347 825 348 C930 350 1040 410 1120 453 C1200 505 1290 610 1355 677 L1040 907 C960 830 860 730 790 685 C710 630 620 590 523 579 C470 575 420 590 382 606" fill="none" stroke="#ffb400" stroke-width="2.500" stroke-dasharray="9 3"/>
      <path d="M620 425 C660 392 720 347 825 348 C930 350 1040 410 1120 453 C1200 505 1290 610 1355 677 L1040 907 C960 830 860 730 790 685 C710 630 620 590 523 579 C470 575 420 590 382 606" fill="none" stroke="#2222cc" stroke-width="1.200" stroke-dasharray="2 10"/>
      <circle cx="806" cy="315" r="5" fill="none" stroke="#eba900" stroke-width="2"/>
      <g opacity=".85">
        <path d="M830 488L827 501H833Z" fill="#c79a3a"/>
        <path d="M827 511L821 525H834Z" fill="#a68652"/>
        <path d="M824 525H831L830 550H822Z" fill="#8b6c4a"/>
        <path d="M826 547L846 536" stroke="#66a010" stroke-width="5"/>
        <path d="M829 549L858 560" stroke="#c95a20" stroke-width="3"/>
        <path d="M852 558L862 562L850 563Z" fill="#c95a20"/>
        <path d="M872 565L886 571L872 571Z" fill="#c8a04a"/>
        <path d="M827 511L846 505V528L873 548L858 561M846 528L829 540" fill="none" stroke="#8b7a30" stroke-width=".6"/>
        <path d="M827 473H838L834 479" fill="none" stroke="#bb5020" stroke-width="1.300"/>
      </g>
      <path d="M819 547H831L826 602H813Z" fill="#6b5664"/>
      <path d="M808 600Q819 594 830 600L816 628Z" fill="#6b5a48"/>
      <ellipse cx="819" cy="601" rx="6" ry="4" fill="#3d2c8a"/>
      <ellipse cx="825" cy="549" rx="5" ry="3" fill="#4a3c78"/>
      <path d="M438 936L440 908" stroke="#1414e0" stroke-width="5"/>
      <path d="M441 899L435 912H447Z" fill="#3a3aff"/>
      <path d="M438 935L456 922" stroke="#12a812" stroke-width="5"/>
      <path d="M461 920L450 923L456 930Z" fill="#16b816"/>
      <circle cx="452" cy="924" r="3.500" fill="#20d020"/>
      <path d="M438 935L466 946" stroke="#e01818" stroke-width="4"/>
      <path d="M476 950L463 942L461 950Z" fill="#f04848"/>
      <text x="436" y="900" class="ax z">Z</text>
      <text x="458" y="926" class="ax y">Y</text>
      <text x="477" y="961" class="ax x">X</text>
    </svg>
    <div class="scale">200 mm</div>
  </section>
</main>
</div>

<div class="dropmenu">
  <div class="mitem"><span class="mic"><svg width="22" height="22" viewBox="0 0 22 22"><path d="M11 3V19M3 11H19" stroke="#cf2430" stroke-width="2.400"/></svg></span><span class="mtx">点</span></div>
  <div class="mitem"><span class="mic"><svg width="40" height="34" viewBox="0 0 40 34"><path d="M4 12Q10 3 15 4Q20 5 24 10Q30 12 35 7" fill="none" stroke="#2e93ba" stroke-width="2"/><g fill="#d0222c"><circle cx="4" cy="12" r="2.400"/><circle cx="15" cy="4" r="2.400"/><circle cx="27" cy="11" r="2.400"/><circle cx="35" cy="7" r="2.400"/><circle cx="30" cy="25" r="2.400"/></g><text x="14" y="33" class="hash">#</text></svg></span><span class="mtx">点在曲线上</span></div>
  <div class="mitem cur"><span class="mic"><svg width="42" height="42"><use href="#proj"/></svg></span><span class="mtx">投影</span></div>
</div>

<aside class="dialog">
  <div class="dtitle"><svg width="22" height="22"><use href="#proj"/></svg><b>投影</b><svg class="dx" width="16" height="14" viewBox="0 0 16 14"><path d="M2 1L14 13M14 1L2 13" stroke="#a8adb2" stroke-width="4"/><path d="M2 1L14 13M14 1L2 13" stroke="#f4f5f6" stroke-width="1.400"/></svg></div>
  <div class="dbtns">
    <span class="dbtn ok"><svg width="24" height="20" viewBox="0 0 24 20"><path d="M2 10L9 17L22 3" fill="none" stroke="#2ec42e" stroke-width="5"/></svg></span>
    <span class="dbtn cancel"><svg width="24" height="24" viewBox="0 0 24 24"><path d="M3 3L21 21M21 3L3 21" stroke="#e0332a" stroke-width="5.500"/></svg></span>
    <span class="dbtn apply"><svg width="22" height="22" viewBox="0 0 22 22"><rect x="2" y="4" width="14" height="15" fill="#fff" stroke="#e0332a" stroke-width="2.600"/><path d="M7 9L11 13L20 4" fill="none" stroke="#2ec42e" stroke-width="3.400"/></svg></span>
    <span class="dbtn info"><svg width="20" height="20" viewBox="0 0 20 20"><circle cx="10" cy="10" r="8.500" fill="#1d5fb8" stroke="#b8c8d8" stroke-width="1.500"/><rect x="8.800" y="8" width="2.400" height="7" fill="#fff"/><rect x="8.800" y="4.500" width="2.400" height="2.400" fill="#fff"/></svg></span>
    <span class="dbtn more"><svg width="14" height="24" viewBox="0 0 14 24"><path d="M3 1V21H12" fill="none" stroke="#2a9bd0" stroke-width="2"/><path d="M6 4L10 11L6 18M9 4L13 11L9 18" fill="none" stroke="#e89a3c" stroke-width="1.600"/></svg></span>
  </div>
  <div class="sech"><i class="tri-d"></i><b>必选</b></div>
  <div class="secb two">
    <div class="frow"><label>点</label><input class="fin" value="选中1个" readonly><svg class="chv" width="14" height="16"><use href="#chev"/></svg><svg class="rd" width="20" height="20"><use href="#redown"/></svg></div>
    <div class="frow"><label>几何体</label><input class="fin on" value="选中1个" readonly><svg class="chv" width="14" height="16"><use href="#chev"/></svg><svg class="rd" width="20" height="20"><use href="#redown"/></svg></div>
  </div>
  <div class="sech"><i class="tri-d"></i><b>投影方向</b></div>
  <div class="secb dirb">
    <div class="frow"><label>方向</label><input class="fin dir" value="0,0,-1" readonly><svg class="chv" width="14" height="16"><use href="#chev"/></svg><svg class="rd g" width="20" height="20" viewBox="0 0 20 20"><path d="M6 1H14V7H18L10 15L2 7H6Z" fill="#5ed84a" stroke="#3f9f30"/><path d="M2 18H18" stroke="#4db03a" stroke-width="2"/></svg><i class="caret dk gc"></i></div>
  </div>
  <div class="sech"><i class="tri-d"></i><b>设置</b></div>
  <div class="secb set">
    <svg width="16" height="16" viewBox="0 0 16 16"><rect x=".5" y=".5" width="15" height="15" fill="#d5d9de" stroke="#8f969c"/><path d="M3.500 8L7 12L12.500 4" fill="none" stroke="#4e6d90" stroke-width="1.600"/></svg>
    <span>面边界修剪</span>
  </div>
</aside>

<i class="hl h1"></i><i class="hl h2"></i><i class="hl h3"></i><i class="hl h4"></i><i class="hl h5"></i>
<span class="badge b1">1</span><span class="badge b2">2</span><span class="badge b3">3</span><span class="badge b4">4</span><span class="badge b5">5</span>
</body>
</html>
```
FILE: styles.css
```css
*{box-sizing:border-box}
html,body{margin:0;padding:0}
body{width:1504px;height:994px;overflow:hidden;position:relative;background:#e1e5e9;font:15px/20px "Noto Sans CJK SC","Noto Sans",sans-serif;color:#333}
.defs{position:absolute}
svg{display:block;flex:none}
.app{display:flex;flex-direction:column;height:994px}

/* title bar */
.titlebar{height:32px;display:flex;align-items:center;flex:none}
.logo{margin-left:3px}
.qsep{width:1px;height:14px;background:#aaa;margin:0 7px 0 1px}
.qa{width:28px;display:flex;justify-content:center}
.qa-sm{width:17px;display:flex;justify-content:center}
.menubar{display:flex;gap:16.5px;margin-left:13px;flex:1;white-space:nowrap}
.apptitle{width:176px;flex:none;overflow:hidden;white-space:nowrap;color:#555}

/* tabs */
.tabbar{height:28px;display:flex;align-items:flex-end;flex:none;white-space:nowrap;padding-left:2px}
.filetab{width:88px;height:25px;background:#2a5eb3;border:1px solid #1c4a96;color:#e6effb;text-align:center;line-height:24px;margin-right:5px}
.tab{height:26px;padding:0 11.88px;line-height:26px;color:#444}
.tab.active{height:27px;background:#fdfdfd;border:1px solid #c2c8cf;border-bottom:0;padding:0 10.88px;line-height:26px}

/* ribbon */
.ribbon{height:119px;background:#fdfdfd;border-top:1px solid #c2c8cf;border-bottom:1px solid #c9ced4;display:flex;padding-left:9px;flex:none;overflow:hidden}
.rgroup{display:flex;flex-direction:column;flex:none}
.ritems{display:flex;height:91px;padding-top:4px}
.ritem{display:flex;flex-direction:column;align-items:center;padding:0 8px;white-space:nowrap;position:relative;height:86px;color:#333}
.ritem.narrow{width:41px}
.ritem.m{margin-left:-1px}
.ritem.d2{padding:0 7.5px}
.ritem.endg{margin-right:1px}
.ritem.hot{background:#ffe27a;border:1px solid #d8a648;padding:0 7px}
.ric{width:44px;height:44px;margin:0 -8px -2px}
.ritem.hot .ric{background:#ffe9a0;margin:0 -8px;border-bottom:1px solid #d8a648;width:44px;height:42px}
.ritem span{line-height:20px;height:20px}
.caret{display:block;width:0;height:0;border-left:4px solid transparent;border-right:4px solid transparent;border-top:4px solid #555;flex:none}
.ritem .caret{margin-top:13px}
.rlabel{height:24px;line-height:22px;text-align:center;color:#6b7480;position:relative}
.rlabel.shifted{padding-right:3px}
.rsep{width:1px;height:110px;margin:6px 4px 0 3px;background:#ced3d8;flex:none}
.rsep.last{margin-right:3px}
.corner{position:absolute;right:5px;top:6px}

/* toolbar */
.toolbar{height:33px;display:flex;align-items:center;flex:none;white-space:nowrap;padding-left:4px}
.grip{width:2px;height:24px;background:repeating-linear-gradient(#7b97b3 0 2px,transparent 2px 4px)}
.tb-spacer{width:176px}
.filt{margin-right:1px}
.combo{height:26px;background:#fff;border:1px solid #bfc5cc;display:flex;align-items:center;justify-content:space-between;padding:0 8px 0 4px;color:#222;font-size:15px}
.caret.dk{border-top-color:#333}
.caret.lt{border-top-color:#b8bcc0}
.c-all{width:120px;margin-right:2px}
.hotbtn{width:27px;height:27px;background:#ffdf7c;border:1px solid #c69a48;display:flex;align-items:center;justify-content:center}
.c-parts{width:165px;background:#e9ebed;border-color:#e9ebed;color:#9a9ea3;margin-right:1px}
.tb{width:28px;display:flex;justify-content:center}
.tb svg.hue-r{filter:hue-rotate(150deg) saturate(1.5)}
.tb svg.gray{filter:grayscale(1)}
.vsep{width:1px;height:20px;background:#b9bec4;margin:0 4px 0 3px;flex:none}
.c-sel{width:120px;margin:0 0 0 1px}
.tb.first{margin-left:1px}

/* doc bar */
.docbar{height:27px;display:flex;align-items:flex-end;flex:none;position:relative}
.panelhead{width:383px;height:27px;position:relative;display:flex;align-items:center;padding-left:5px}
.pt{color:#444}
.pbtn{position:absolute;left:333px;top:9px}
.pbtn.x{left:356px;top:8px}
.doctab{width:174px;height:26px;background:#fff;border:1px solid #c5cad0;border-bottom:0;display:flex;align-items:center;padding-left:37px;gap:7px;color:#222;font-size:14px;white-space:nowrap}
.plus{margin:0 0 6px 9px}
.expander{position:absolute;right:6px;top:9px}

/* main */
.main{flex:1;display:flex;min-height:0;border-top:1px solid #c3c9d0}
.strip{width:42px;flex:none;display:flex;flex-direction:column;align-items:center;padding-right:2px}
.activetab{width:41px;height:57px;background:#fff;border:1px solid #c3c9d0;border-right:0;margin-left:3px;flex:none;display:flex;align-items:center;padding-left:1px;overflow:hidden;align-self:flex-start}
.cliptab{margin-top:4px}
.sbtn{display:block;flex:none}
.s-a{margin-top:18px}
.s-b{margin-top:28px}
.s-c{margin-top:32px}
.panel{width:335px;flex:none;display:flex;flex-direction:column;gap:2px;padding-bottom:2px}
.treebox{flex:1;border:1px solid #b9c0c8;border-top:0;background:#fff;display:flex;flex-direction:column;min-height:0}
.searchrow{height:34px;background:#fff;display:flex;align-items:center;padding:0 2px;flex:none;gap:2px}
.sel{width:147px;height:30px;border:1px solid #c3c9d0;display:flex;align-items:center;justify-content:flex-end;padding-right:4px}
.search{width:150px;height:30px;border:1px solid #c3c9d0}
.filterbtn{width:27px;height:30px;border:1px solid #c3c9d0;display:flex;align-items:center;justify-content:center}
.thead{height:29px;background:#f3f4f5;border-top:1px solid #c3c9d0;border-bottom:1px solid #c3c9d0;display:flex;flex:none;color:#333;font-size:14px}
.th1{width:288px;border-right:1px solid #c3c9d0;padding:2px 0 0 7px}
.tree{flex:1;display:flex;flex-direction:column;min-height:0;font-size:15px;overflow:hidden}
.row{height:23px;flex:none;display:flex;align-items:center;width:288px;border-right:1px solid #cdd2d8;color:#222;position:relative;white-space:nowrap}
.row:nth-child(even)::before{content:"";position:absolute;left:0;top:0;bottom:0;width:334px;background:#f4f4f4;z-index:0}
.row>*{position:relative;z-index:1}
.row.l0{padding-left:3px}
.row.l0 .ex{margin-right:6px}
.row.l0 .ti{margin-right:3px}
.row.l1{padding-left:22px}
.row.l1 .ex{width:12px;margin-right:5px}
.row.l1 .ti{margin-right:3px}
.row.l2{padding-left:57px}
.cb{margin-right:7px}
.row.l2 .ti{margin-right:2px}
.row.dim{color:#9a9ea3}
.row.stop{padding-left:57px;color:#ee1c25;gap:3px;word-spacing:4px}
.stripes{flex:1;background:repeating-linear-gradient(#f4f4f4 0 23px,#fff 23px 46px)}
.replay{height:30px;flex:none;background:#fcfcfc;border:1px solid #b9c0c8;display:flex;align-items:center;padding-left:5px;gap:10px;font-size:15px;color:#333}
.replay b{font-weight:700}
.tri-r{width:0;height:0;border-top:6px solid transparent;border-bottom:6px solid transparent;border-left:8px solid #555}
.viewport{flex:1;position:relative;margin-left:3px;background:#fff;border-left:1px solid #b8c2cd;overflow:hidden}
.scene{position:absolute;left:-1px;top:0}
.vtools{position:absolute;right:0;left:0;top:4px;height:24px;display:flex;align-items:center;padding-left:207px;z-index:2}
.vt{display:flex;align-items:center;flex:none}
.vt svg{width:22px;height:22px}
.vt .caret{margin-left:7px}
.w27{width:27px}.w28{width:28px}.w29{width:29px}.w40{width:40px}.w43{width:43px}.w44{width:44px}.w45{width:45px}.w47{width:47px}
.swatch{display:block;flex:none}
.swatch.black{width:20px;height:10px;background:#000;margin:0 10px 0 1px}
.swatch.blue{width:18px;height:18px;background:#bce4f5;border:1px solid #222;margin-right:10px}
.vend{width:6px;height:26px;background:#f1f2f3;border:1px solid #e2e4e6;flex:none}
.hint{position:absolute;left:22px;top:37px;z-index:2;font-size:15px;line-height:20px;color:#222}
.hint p{margin:0}
.sigma{font:700 18px "Liberation Sans",sans-serif;fill:#222}
.bigA{font:700 34px "Liberation Serif",serif;fill:#3a9cc2;text-anchor:middle}
.hash{font:700 20px "Liberation Sans",sans-serif;fill:#1d7fa8}
.ax{font:22px "Liberation Sans",sans-serif}
.ax.z{fill:#1a1aee}.ax.y{fill:#22e022}.ax.x{fill:#f01414}
.scale{position:absolute;left:5px;bottom:0;font:22.5px/26px "Liberation Sans",sans-serif;color:#111}

/* dropdown */
.dropmenu{position:absolute;left:10px;top:152px;width:172px;height:140px;background:#fff;border:1px solid #c8ccd0;box-shadow:2px 2px 3px rgba(0,0,0,.25);z-index:5;display:flex;flex-direction:column;font-size:15px;color:#555}
.mitem{height:45px;flex:none;display:flex;align-items:center;position:relative}
.mic{width:51px;height:100%;display:flex;align-items:center;justify-content:center;border-right:1px solid #dcdfe2;flex:none}
.mtx{padding-left:5px}
.mitem.cur{height:48px}
.mitem.cur .mtx{font-weight:700;margin-top:-2px}

/* dialog */
.dialog{position:absolute;left:1160px;top:238px;width:344px;height:329px;background:#e6e8ea;border:1px solid #7e868e;z-index:6;padding:0 6px;display:flex;flex-direction:column;font-size:15px;color:#222}
.dtitle{height:40px;display:flex;align-items:center;gap:5px;padding-left:1px;position:relative;flex:none}
.dtitle b{font-size:15px;color:#333}
.dx{position:absolute;right:7px;top:13px}
.dbtns{height:33px;display:flex;gap:5px;flex:none;align-items:flex-start}
.dbtn{width:28px;height:29px;display:flex;align-items:center;justify-content:center;border:1px solid #cfd3d7;background:#f4f5f6}
.dbtn.ok{width:32px;margin-left:-1px;background:#fdfdf6;border:1px solid #eec75c}
.dbtn.apply{width:32px}
.dbtn.info{margin-left:auto;width:33px}
.dbtn.more{width:16px;margin-left:-2px;margin-right:-2px}
.sech{height:28px;background:#fcfcfc;border:1px solid #d5d9dd;border-bottom-color:#b9bec4;display:flex;align-items:center;padding-left:5px;gap:5px;flex:none}
.sech b{font-size:15px;color:#444}
.tri-d{width:0;height:0;border-left:6px solid transparent;border-right:6px solid transparent;border-top:9px solid #555}
.secb{margin:2px 0 3px;background:#dde1e7;border:1px solid #eef0f2;flex:none;padding:2px 0 0}
.secb.two{height:67px}
.secb.dirb{height:38px;margin-bottom:1px}
.frow{height:31px;display:flex;align-items:center;padding-left:10px;position:relative}
.frow label{width:105px;flex:none}
.fin{width:144px;height:26px;border:1px solid #c5cad0;background:#fff;font:15px "Noto Sans CJK SC",sans-serif;padding:0 2px;color:#222;margin-left:1px;outline:0}
.fin.on{border-color:#27b52f;width:146px;height:27px;margin-left:0}
.fin.dir{width:131px;margin-left:0}
.chv{margin-left:8px}
.fin.on + .chv{margin-left:7px}
.rd{margin-left:10px}
.rd.g{margin-left:10px}
.gc{margin-left:6px}
.secb.set{height:31px;display:flex;align-items:center;padding:0 0 0 10px;gap:6px;color:#333}

/* overlays */
.hl{position:absolute;border:3px solid #fe7f00;z-index:7;display:block}
.h1{left:198px;top:28px;width:65px;height:37px}
.h2{left:9px;top:241px;width:173px;height:52px}
.h3{left:1171px;top:341px;width:319px;height:68px}
.h4{left:1170px;top:441px;width:320px;height:40px}
.h5{left:1160px;top:267px;width:43px;height:48px}
.badge{position:absolute;width:40px;height:40px;border-radius:50%;background:#4f7bca;color:#fff;font:32px/40px "Liberation Sans",sans-serif;text-align:center;box-shadow:1px 2px 4px rgba(0,0,0,.4);z-index:8}
.b1{left:151px;top:24px}
.b2{left:181px;top:246px}
.b3{left:1119px;top:358px}
.b4{left:1123px;top:439px}
.b5{left:1118px;top:274px}
```
